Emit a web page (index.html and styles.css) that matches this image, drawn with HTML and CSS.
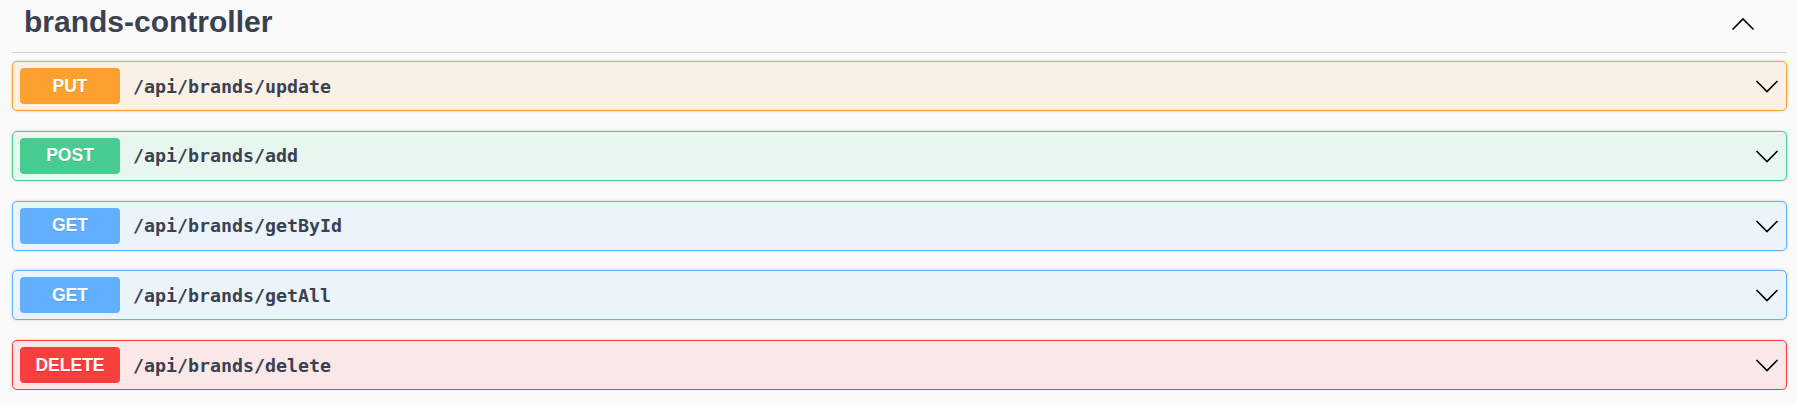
FILE: index.html
```html
<!DOCTYPE html>
<html>
<head>
<meta charset="utf-8">
<link rel="stylesheet" href="styles.css">
</head>
<body>
<div class="wrap">
  <div class="tag-header">
    <h3 class="tag-title">brands-controller</h3>
    <svg class="tag-arrow" width="24" height="24" viewBox="0 0 24 24"><polyline points="1.5,17.5 12,7 22.5,17.5" fill="none" stroke="#000" stroke-width="1.6"/></svg>
  </div>
  <div class="ops">
    <div class="op op-put">
      <span class="method">PUT</span>
      <span class="path">/api/brands/update</span>
      <svg class="op-arrow" width="24" height="24" viewBox="0 0 24 24"><polyline points="1.5,7 12,17.5 22.5,7" fill="none" stroke="#000" stroke-width="1.6"/></svg>
    </div>
    <div class="op op-post">
      <span class="method">POST</span>
      <span class="path">/api/brands/add</span>
      <svg class="op-arrow" width="24" height="24" viewBox="0 0 24 24"><polyline points="1.5,7 12,17.5 22.5,7" fill="none" stroke="#000" stroke-width="1.6"/></svg>
    </div>
    <div class="op op-get">
      <span class="method">GET</span>
      <span class="path">/api/brands/getById</span>
      <svg class="op-arrow" width="24" height="24" viewBox="0 0 24 24"><polyline points="1.5,7 12,17.5 22.5,7" fill="none" stroke="#000" stroke-width="1.6"/></svg>
    </div>
    <div class="op op-get">
      <span class="method">GET</span>
      <span class="path">/api/brands/getAll</span>
      <svg class="op-arrow" width="24" height="24" viewBox="0 0 24 24"><polyline points="1.5,7 12,17.5 22.5,7" fill="none" stroke="#000" stroke-width="1.6"/></svg>
    </div>
    <div class="op op-delete">
      <span class="method">DELETE</span>
      <span class="path">/api/brands/delete</span>
      <svg class="op-arrow" width="24" height="24" viewBox="0 0 24 24"><polyline points="1.5,7 12,17.5 22.5,7" fill="none" stroke="#000" stroke-width="1.6"/></svg>
    </div>
  </div>
</div>
</body>
</html>
```
FILE: styles.css
```css
html, body {
  margin: 0;
  padding: 0;
  background: #fafafa;
}
.wrap {
  padding: 0 10px 0 12px;
}
.tag-header {
  display: flex;
  align-items: flex-start;
  justify-content: space-between;
  padding: 4px 32px 12px 12px;
  border-bottom: 1px solid #d2d3d6;
}
.tag-title {
  margin: 0;
  font-family: "Liberation Sans", Arial, sans-serif;
  font-weight: bold;
  font-size: 30px;
  line-height: 36px;
  color: #3b4151;
}
.tag-arrow {
  margin-top: 8px;
  display: block;
}
.ops {
  display: flex;
  flex-direction: column;
  gap: 19.75px;
  margin-top: 8px;
}
.op {
  display: flex;
  align-items: center;
  height: 50px;
  box-sizing: border-box;
  padding: 0 7px;
  border: 1px solid;
  border-radius: 5px;
  box-shadow: 0 0 3px rgba(0,0,0,0.19);
}
.method {
  width: 100px;
  height: 36px;
  display: flex;
  align-items: center;
  justify-content: center;
  border-radius: 4px;
  color: #fff;
  font-family: "Liberation Sans", Arial, sans-serif;
  font-weight: bold;
  font-size: 17.5px;
  text-shadow: 0 1px 0 rgba(0,0,0,0.1);
}
.path {
  margin-left: 13px;
  font-family: "DejaVu Sans Mono", "Liberation Mono", monospace;
  font-weight: bold;
  font-size: 18.3px;
  color: #3b4151;
}
.op-arrow {
  margin-left: auto;
  display: block;
}
.op-put { background: #faf1e6; border-color: #fca130; }
.op-put .method { background: #fca130; }
.op-post { background: #e8f6f0; border-color: #49cc90; }
.op-post .method { background: #49cc90; }
.op-get { background: #ebf3fb; border-color: #61affe; }
.op-get .method { background: #61affe; }
.op-delete { background: #fae7e7; border-color: #f93e3e; }
.op-delete .method { background: #f93e3e; }
```
